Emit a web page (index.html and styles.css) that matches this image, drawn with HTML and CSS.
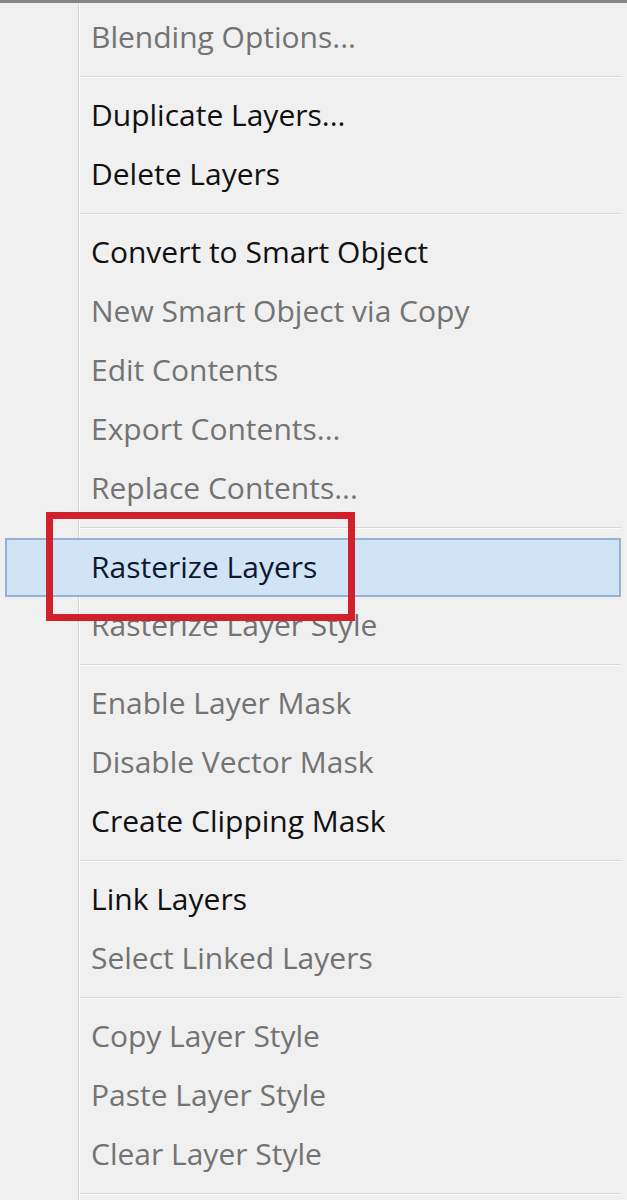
FILE: index.html
```html
<!DOCTYPE html>
<html lang="en">
<head>
<meta charset="utf-8">
<title>Layer context menu</title>
<link rel="stylesheet" href="styles.css">
</head>
<body>
<div class="menu">
  <div class="item disabled">Blending Options...</div>
  <div class="sep"></div>
  <div class="item">Duplicate Layers...</div>
  <div class="item">Delete Layers</div>
  <div class="sep"></div>
  <div class="item">Convert to Smart Object</div>
  <div class="item disabled">New Smart Object via Copy</div>
  <div class="item disabled">Edit Contents</div>
  <div class="item disabled">Export Contents...</div>
  <div class="item disabled">Replace Contents...</div>
  <div class="sep"></div>
  <div class="item hover">Rasterize Layers</div>
  <div class="item disabled">Rasterize Layer Style</div>
  <div class="sep"></div>
  <div class="item disabled">Enable Layer Mask</div>
  <div class="item disabled">Disable Vector Mask</div>
  <div class="item">Create Clipping Mask</div>
  <div class="sep"></div>
  <div class="item">Link Layers</div>
  <div class="item disabled">Select Linked Layers</div>
  <div class="sep"></div>
  <div class="item disabled">Copy Layer Style</div>
  <div class="item disabled">Paste Layer Style</div>
  <div class="item disabled">Clear Layer Style</div>
  <div class="sep"></div>
  <div class="callout"></div>
</div>
</body>
</html>
```
FILE: styles.css
```css
html, body {
  margin: 0;
  padding: 0;
  background: #f0f0f0;
}

body {
  font-family: "Open Sans", "Noto Sans", "DejaVu Sans", sans-serif;
}

.menu {
  position: relative;
  box-sizing: border-box;
  min-height: 1200px;
  border-top: 3px solid #868686;
  padding: 5.5px 6px 0 5px;
  background:
    linear-gradient(to right,
      transparent 78px,
      #d3d3d3 78px, #d3d3d3 79px,
      #fbfbfb 79px, #fbfbfb 80px,
      transparent 80px),
    #f0f0f0;
}

.item {
  box-sizing: border-box;
  height: 59px;
  display: flex;
  align-items: center;
  padding-left: 85px;
  padding-bottom: 3px;
  border: 1px solid transparent;
  font-size: 30px;
  font-weight: 500;
  color: #111111;
  white-space: nowrap;
}

.item.disabled {
  color: #737373;
}

.item.hover {
  background: #d1e4f6;
  border: 2px solid #93b2d6;
  padding-left: 84px;
  padding-bottom: 2px;
  color: #0e1830;
}

.sep {
  height: 2px;
  margin: 8px 0 9px 75px;
  background: #d9d9d9;
  border-bottom: 1px solid #fbfbfb;
  box-sizing: border-box;
}

.callout {
  position: absolute;
  left: 46px;
  top: 509px;
  width: 309px;
  height: 109px;
  box-sizing: border-box;
  border: 7px solid #d0202c;
}
```
